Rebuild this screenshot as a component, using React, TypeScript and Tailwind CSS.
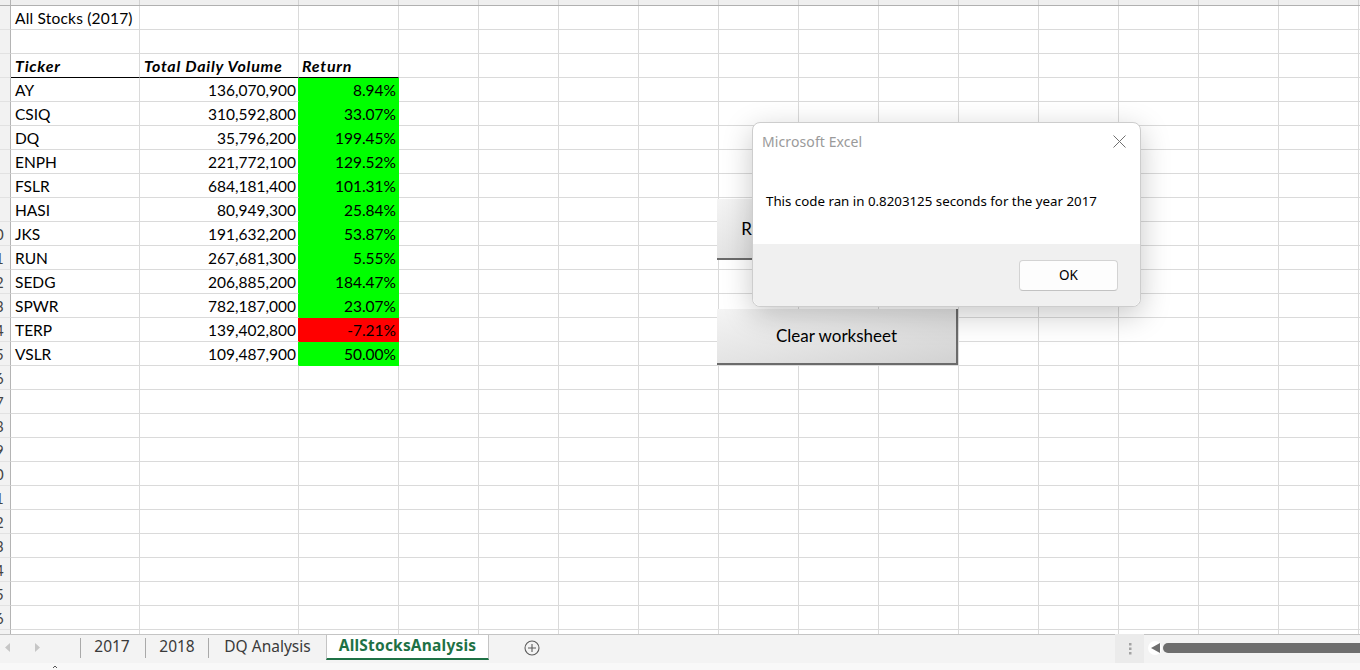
import React from "react"

type Row = {
  a?: string
  b?: string
  c?: string
  fill?: "green" | "red"
  kind?: "title" | "head"
}

const stocks: [string, string, string][] = [
  ["AY", "136,070,900", "8.94%"],
  ["CSIQ", "310,592,800", "33.07%"],
  ["DQ", "35,796,200", "199.45%"],
  ["ENPH", "221,772,100", "129.52%"],
  ["FSLR", "684,181,400", "101.31%"],
  ["HASI", "80,949,300", "25.84%"],
  ["JKS", "191,632,200", "53.87%"],
  ["RUN", "267,681,300", "5.55%"],
  ["SEDG", "206,885,200", "184.47%"],
  ["SPWR", "782,187,000", "23.07%"],
  ["TERP", "139,402,800", "-7.21%"],
  ["VSLR", "109,487,900", "50.00%"],
]

const rows: Row[] = [
  { a: "All Stocks (2017)", kind: "title" },
  {},
  { a: "Ticker", b: "Total Daily Volume", c: "Return", kind: "head" },
  ...stocks.map(([a, b, c]): Row => ({ a, b, c, fill: c.startsWith("-") ? "red" : "green" })),
  ...Array.from({ length: 12 }, (): Row => ({})),
]

const extraCols = Array.from({ length: 12 }, (_, i) => i)

function SheetRow({ row, n }: { row: Row; n: number }) {
  const head = row.kind === "head"
  const fillCls =
    row.fill === "red"
      ? "bg-[#ff0000] border-[#ff0000]"
      : row.fill === "green"
        ? "bg-[#00ff00] border-[#00ff00]"
        : head
          ? "border-r-[#dadada] border-b-black"
          : "border-[#dadada]"
  const text = head
    ? "font-bold italic text-[16px] tracking-[0.75px] pt-[1px] leading-[21px]"
    : row.kind === "title"
      ? "text-[15.5px] tracking-[0.2px] pt-[2px] leading-[21px]"
      : "text-[15.5px] pt-[2px] leading-[21px]"

  return (
    <div className="flex h-[24px] shrink-0">
      {/* row number, only the tail of it shows */}
      <div className="w-[11px] shrink-0 overflow-hidden bg-[#f2f2f2] border-r border-b border-r-[#b4b4b4] border-b-[#e2e2e2]">
        <div className="-ml-[23px] w-[36px] text-center text-[15px] leading-[21px] pt-[2px] text-[#444]">{n}</div>
      </div>
      <div
        className={`w-[129px] shrink-0 border-r border-b border-r-[#dadada] ${head ? "border-b-black" : "border-b-[#dadada]"} pl-[4px] text-black whitespace-nowrap ${text}`}
      >
        {row.a}
      </div>
      <div
        className={`w-[159px] shrink-0 border-r border-b ${row.fill === "red" ? "border-r-[#ff0000]" : row.fill === "green" ? "border-r-[#00ff00]" : "border-r-[#dadada]"} ${head ? "border-b-black text-left pl-[4px]" : "border-b-[#dadada] text-right pr-[2px]"} text-black whitespace-nowrap ${text}`}
      >
        {row.b}
      </div>
      <div
        className={`w-[100px] shrink-0 border-r border-b ${fillCls} ${head ? "text-left pl-[3px]" : "text-right pr-[2px]"} text-black whitespace-nowrap ${text}`}
      >
        {row.c}
      </div>
      {extraCols.map((i) => (
        <div key={i} className="w-[80px] shrink-0 border-r border-b border-[#dadada]" />
      ))}
      <div className="flex-1 border-b border-[#dadada]" />
    </div>
  )
}

function FormButton({ label, className }: { label: string; className: string }) {
  return (
    <div
      className={`absolute flex items-center justify-center bg-gradient-to-br from-[#f4f4f4] via-[#e4e4e4] to-[#d2d2d2] border-r-2 border-b-2 border-[#6b6b6b] text-[17px] text-black whitespace-nowrap overflow-hidden ${className}`}
    >
      {label}
    </div>
  )
}

function MessageBox() {
  return (
    <div className="absolute left-[752px] top-[122px] w-[389px] h-[185px] flex flex-col rounded-[8px] border border-[#cdcdcd] bg-white shadow-[0_8px_30px_rgba(0,0,0,0.22)] font-['Noto_Sans',sans-serif]">
      <div className="h-[36px] flex items-center justify-between pl-[9px] pr-[14px]">
        <span className="text-[14px] tracking-[0.1px] text-[#9a9a9a]">Microsoft Excel</span>
        <svg width="13" height="13" viewBox="0 0 13 13" className="text-[#707070]">
          <path d="M0.5 0.5 L12.5 12.5 M12.5 0.5 L0.5 12.5" stroke="currentColor" strokeWidth="1" />
        </svg>
      </div>
      <div className="h-[85px] flex items-center pl-[13px] text-[13.3px] text-black">
        This code ran in 0.8203125 seconds for the year 2017
      </div>
      <div className="flex-1 flex items-start justify-end pt-[16px] pr-[22px] bg-[#f0f0f0] rounded-b-[8px]">
        <div className="w-[99px] h-[31px] flex items-center justify-center rounded-[4px] bg-[#fdfdfd] border border-[#d3d3d3] border-b-[#c2c2c2] text-[13.5px] text-black">
          OK
        </div>
      </div>
    </div>
  )
}

function TabBar() {
  return (
    <div className="h-[29px] shrink-0 flex bg-[#f3f3f3] border-t border-[#c4c4c4] font-['Noto_Sans',sans-serif] text-[15.5px]">
      <div className="w-[80px] shrink-0 flex items-center pb-[3px]">
        <svg width="6" height="9" viewBox="0 0 6 9" className="ml-[5px]">
          <path d="M5 0 L0 4.5 L5 9 Z" fill="#c6c6c6" />
        </svg>
        <svg width="6" height="9" viewBox="0 0 6 9" className="ml-[23px]">
          <path d="M1 0 L6 4.5 L1 9 Z" fill="#c6c6c6" />
        </svg>
      </div>
      <div className="w-px h-[20px] mt-[3px] bg-[#a9a9a9]" />
      <div className="w-[64px] flex items-center justify-center pb-[4px] pr-[2px] text-[#3a3a3a]">2017</div>
      <div className="w-px h-[20px] mt-[3px] bg-[#a9a9a9]" />
      <div className="w-[62px] flex items-center justify-center pb-[4px] text-[#3a3a3a]">2018</div>
      <div className="w-px h-[20px] mt-[3px] bg-[#a9a9a9]" />
      <div className="w-[117px] flex items-center justify-center pb-[4px] text-[#3a3a3a]">DQ Analysis</div>
      <div className="w-[163px] h-[26px] -mt-px flex items-center justify-center bg-white border border-b-2 border-[#c4c4c4] border-b-[#1e7145] pb-[2px] font-bold tracking-[0.2px] text-[#1e7145]">
        AllStocksAnalysis
      </div>
      <div className="ml-[35px] flex items-center pb-[3px]">
        <svg width="16" height="16" viewBox="0 0 16 16">
          <circle cx="8" cy="8" r="7" fill="none" stroke="#5c5c5c" strokeWidth="1.1" />
          <path d="M8 4 V12 M4 8 H12" stroke="#5c5c5c" strokeWidth="1.1" />
        </svg>
      </div>
      <div className="flex-1" />
      <div className="w-[29px] -mt-px h-[29px] flex items-center justify-center bg-[#ebebeb]">
        <svg width="4" height="14" viewBox="0 0 4 14">
          <rect x="1" y="1" width="2.5" height="2.5" fill="#a3a3a3" />
          <rect x="1" y="5.5" width="2.5" height="2.5" fill="#a3a3a3" />
          <rect x="1" y="10" width="2.5" height="2.5" fill="#a3a3a3" />
        </svg>
      </div>
      <div className="ml-[4px] w-[14px] h-[14px] mt-[6px] rounded-full bg-white flex items-center justify-center">
        <svg width="9" height="10" viewBox="0 0 9 10">
          <path d="M9 0 L0 5 L9 10 Z" fill="#6e6e6e" />
        </svg>
      </div>
      <div className="ml-[1px] w-[197px] h-[10px] mt-[8px] rounded-l-full bg-[#6e6e6e]" />
    </div>
  )
}

export default function App() {
  return (
    <div className="w-[1360px] h-[670px] flex flex-col overflow-hidden bg-white font-['Lato',sans-serif]">
      <div className="relative h-[634px] shrink-0 overflow-hidden">
        {/* column header strip, mostly scrolled out of view */}
        <div className="flex h-[6px] bg-[#efefef] border-b border-[#b0b0b0]">
          <div className="w-[11px] shrink-0 border-r border-[#b4b4b4]" />
          <div className="w-[129px] shrink-0 border-r border-[#d2d2d2]" />
          <div className="w-[159px] shrink-0 border-r border-[#d2d2d2]" />
          <div className="w-[100px] shrink-0 border-r border-[#d2d2d2]" />
          {extraCols.map((i) => (
            <div key={i} className="w-[80px] shrink-0 border-r border-[#d2d2d2]" />
          ))}
        </div>
        {rows.map((row, i) => (
          <SheetRow key={i} row={row} n={i + 1} />
        ))}

        <FormButton label="Run Analysis for All Stocks" className="left-[717px] top-[199px] w-[241px] h-[61px] pl-[5px]" />
        <FormButton label="Clear worksheet" className="left-[717px] top-[309px] w-[241px] h-[56px]" />
        <MessageBox />
      </div>
      <TabBar />
      <div className="h-[7px] shrink-0 bg-[#f8f8f8] pl-[52px]">
        <svg width="6" height="4" viewBox="0 0 6 4" className="mt-[2px]">
          <path d="M1 3 L3 1 L5 3" fill="none" stroke="#555" strokeWidth="1" />
        </svg>
      </div>
    </div>
  )
}
